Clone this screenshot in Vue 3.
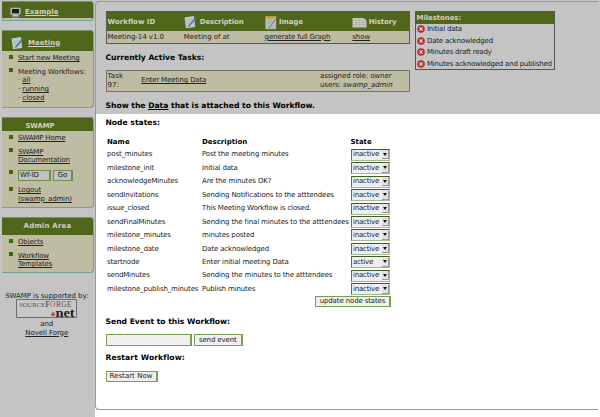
<script setup>
const nodes = [
  ['post_minutes', 'Post the meeting minutes', 'inactive'],
  ['milestone_init', 'Initial data', 'inactive'],
  ['acknowledgeMinutes', 'Are the minutes OK?', 'inactive'],
  ['sendInvitations', 'Sending Notifications to the atttendees', 'inactive'],
  ['issue_closed', 'This Meeting Workflow is closed.', 'inactive'],
  ['sendFinalMinutes', 'Sending the final minutes to the atttendees', 'inactive'],
  ['milestone_minutes', 'minutes posted', 'inactive'],
  ['milestone_date', 'Date acknowledged', 'inactive'],
  ['startnode', 'Enter initial meeting Data', 'active'],
  ['sendMinutes', 'Sending the minutes to the atttendees', 'inactive'],
  ['milestone_publish_minutes', 'Publish minutes', 'inactive'],
]
const milestones = ['Initial data', 'Date acknowledged', 'Minutes draft ready', 'Minutes acknowledged and published']
</script>

<template>
  <div class="page">
    <aside>
      <section class="box example">
        <header>
          <svg width="11" height="11" viewBox="0 0 11 11"><rect x=".5" y=".8" width="10" height="7" rx="1" fill="#b5b7b2" /><rect x="2" y="2" width="7" height="4.3" fill="#161c20" /><path d="M3 8h5l1.5 2.2h-8z" fill="#d1d1cd" /><path d="M2 9.5h7" stroke="#555" stroke-width=".6" /></svg>
          <a>Example</a>
        </header>
      </section>
      <section class="box meeting">
        <header>
          <svg width="13" height="14" viewBox="0 0 13 14"><path d="M.5 2.5L10 1l1.2 11L2 13.2z" fill="#bcc9cf" /><path d="M2 5l7-1M2.2 7l7-1M2.5 9l7-1" stroke="#9bacb5" stroke-width=".6" /><path d="M12 1.5L4.5 10.5l-1 1.5 2-.6L12.8 2.5z" fill="#456f98" /></svg>
          <a>Meeting</a>
        </header>
        <ul>
          <li><a>Start new Meeting</a></li>
          <li class="flows"><p>Meeting Workflows:</p><p>· <a>all</a></p><p>· <a>running</a></p><p>· <a>closed</a></p></li>
        </ul>
      </section>
      <section class="box swamp">
        <header>SWAMP</header>
        <ul>
          <li><a>SWAMP Home</a></li>
          <li><a>SWAMP<br>Documentation</a></li>
          <li class="search"><span class="field wf">Wf-ID</span><span class="field go">Go</span></li>
          <li><a>Logout<br>(swamp_admin)</a></li>
        </ul>
      </section>
      <section class="box admin">
        <header>Admin Area</header>
        <ul>
          <li><a>Objects</a></li>
          <li><a>Workflow<br>Templates</a></li>
        </ul>
      </section>
      <footer>
        <p>SWAMP is supported by:</p>
        <svg class="sf" width="61" height="19" viewBox="0 0 61 19"><rect x=".5" y=".5" width="60" height="18" rx=".5" fill="#c8c8c8" stroke="#555" stroke-width=".8" /><g font-family="Liberation Serif, serif"><text x="3" y="7.8" font-size="6.6" textLength="26" lengthAdjust="spacingAndGlyphs" fill="#555">SOURCE</text><text y="7.8" font-size="7.5" fill="#555"><tspan x="29.3" font-weight="bold">F</tspan><tspan x="34" fill="#b44b43">O</tspan><tspan x="40 45.3 51">RGE</tspan></text><text x="39.5" y="17.5" font-size="11.5" font-weight="bold" textLength="19" lengthAdjust="spacingAndGlyphs" fill="#222">net</text></g><circle cx="37" cy="15.3" r="2" fill="#bd483a" /><circle cx="36.5" cy="14.8" r=".8" fill="#d98b65" /></svg>
        <p>and</p>
        <p><a>Novell Forge</a></p>
      </footer>
    </aside>
    <main>
      <div class="top">
        <div class="left">
          <div class="workflow">
            <div class="row head">
              <span>Workflow ID</span>
              <span><svg width="13" height="14" viewBox="0 0 13 14"><path d="M.5 2.5L10 1l1.2 11L2 13.2z" fill="#bcc9cf" /><path d="M2 5l7-1M2.2 7l7-1M2.5 9l7-1" stroke="#9bacb5" stroke-width=".6" /><path d="M12 1.5L4.5 10.5l-1 1.5 2-.6L12.8 2.5z" fill="#456f98" /></svg><b>Description</b></span>
              <span><svg width="12" height="15" viewBox="0 0 12 15"><rect x=".5" y="1.5" width="10.5" height="12.5" fill="#b9bbb6" stroke="#969891" stroke-width=".5" /><path d="M1 1h7l1 2.5H2z" fill="#c49d20" /><path d="M10.5 4L4 13" stroke="#777b73" /><path d="M3 6h5M3 8h3" stroke="#a0a39c" stroke-width=".6" /></svg><b>Image</b></span>
              <span><svg width="15" height="11" viewBox="0 0 15 11"><path d="M.5 1h11l3 2.5v7H.5z" fill="#c5c6bf" /><path d="M1 3.5h10M1 5.5h13M1 7.5h13M4 1.5v9M7.5 1.5v9M11 1.5v9" stroke="#a9aba4" stroke-width=".4" /></svg><b>History</b></span>
            </div>
            <div class="row data"><span>Meeting-14 v1.0</span><span>Meeting of at</span><span class="tight"><a>generate full Graph</a></span><span><a>show</a></span></div>
          </div>
          <h2 class="current">Currently Active Tasks:</h2>
          <div class="task"><span>Task<br>97:</span><a class="tight">Enter Meeting Data</a><span>assigned role: owner<br>users: <i>swamp_admin</i></span></div>
          <h2 class="show">Show the <a>Data</a> that is attached to this Workflow.</h2>
        </div>
        <div class="milestones">
          <header>Milestones:</header>
          <div v-for="m in milestones" :key="m" class="milestone">
            <svg width="8" height="8" viewBox="0 0 8 8"><circle cx="4" cy="4" r="3.8" fill="#bb2828" /><path d="M2.4 2.4l3.2 3.2M5.6 2.4L2.4 5.6" stroke="#ddd" stroke-width="1.2" /></svg>{{ m }}
          </div>
        </div>
      </div>
      <h2 class="states">Node states:</h2>
      <div class="node names"><b>Name</b><b>Description</b><b>State</b></div>
      <div v-for="n in nodes" :key="n[0]" class="node">
        <span>{{ n[0] }}</span><span>{{ n[1] }}</span>
        <div class="select"><span>{{ n[2] }}</span><i><svg width="4" height="3" viewBox="0 0 4 3"><path d="M0 0h4L2 3z" fill="#111" /></svg></i></div>
      </div>
      <div class="field update">update node states</div>
      <h2 class="send">Send Event to this Workflow:</h2>
      <div class="event"><span class="field input"></span><span class="field button">send event</span></div>
      <h2 class="restart">Restart Workflow:</h2>
      <div class="field now">Restart Now</div>
    </main>
  </div>
</template>

<style>
body { background: #fff; overflow: hidden; }
</style>
<style scoped>
* { box-sizing: border-box; }
.page { width: 600px; height: 417px; display: flex; overflow: hidden; font: 7px/8.7px "DejaVu Sans", sans-serif; color: #222; background: linear-gradient(#c4c4c4 114px, #fff 114px); white-space: nowrap; }
p, ul, h2 { margin: 0; padding: 0; }
a { text-decoration: underline; text-decoration-thickness: .7px; text-underline-offset: 1px; }
svg { flex: none; display: block; }
aside { width: 95px; height: 417px; flex: none; padding: 1px 1px 0 2px; background: #c4c4c4; }
.box { width: 92px; background: #bebca2; border: solid #71a09d; border-width: 0 1px 1px 0; border-radius: 0 4px 4px 0; overflow: hidden; }
.box header { background: #50661a; color: #d0d0c5; font-weight: bold; display: flex; align-items: center; justify-content: center; border-top: 1px solid #71936a; }
.example { height: 20px; }
.example header { height: 17px; justify-content: flex-start; padding: 4px 0 0 8px; gap: 4px; }
.meeting { height: 78px; margin-top: 9px; }
.meeting header { height: 21px; justify-content: flex-start; padding: 4px 0 0 9px; gap: 4px; }
.swamp { height: 91px; margin-top: 9px; }
.swamp header { height: 14px; padding: 4px 15px 0 0; font-size: 6.8px; }
.admin { height: 56px; margin-top: 9px; }
.admin header { height: 18px; letter-spacing: .2px; }
ul { list-style: none; padding: 3.3px 0 0 16px; letter-spacing: -.16px; }
.flows { letter-spacing: -.06px; }
li { position: relative; margin-bottom: 4.6px; }
li::before { content: ''; position: absolute; width: 4px; height: 4px; background: #3f6808; left: -9px; top: .7px; }
.search { display: flex; gap: 2px; height: 12px; letter-spacing: 0; }
.field { display: flex; align-items: center; justify-content: center; height: 11.5px; background: #efefef; border: 1px solid #76a154; border-right-width: 2px; letter-spacing: -.13px; }
.search .field { background: #c0c0c0; border-color: #718f4b; }
.wf.field { width: 33px; justify-content: flex-start; padding-left: 1px; letter-spacing: 0; }
.go { width: 20px; }
footer { display: flex; flex-direction: column; align-items: center; margin-top: 18.6px; padding-right: 2.5px; letter-spacing: -.06px; }
.sf { margin: -1.5px 0 2px; }
main { flex: 1; height: 409px; margin: 1px 2px 0 0; border: solid #77a9a6; border-width: 1px 0 1px 1px; border-radius: 4px 0 0 4px; padding-left: 9.5px; }
.top { height: 112px; display: flex; gap: 4.5px; padding-top: 9px; }
.left { width: 304.5px; }
.workflow { border: 1px solid #59594d; background: #bebca2; height: 33px; }
.row { display: grid; grid-template-columns: 76.2px 80.9px 87.7px 1fr; padding-left: 1px; align-items: center; letter-spacing: -.05px; }
.row > span { display: flex; align-items: center; gap: 3px; }
.row > span:nth-child(3) { gap: 2.5px; }
.row > span:nth-child(4) { gap: 1.5px; }
.head { height: 19px; padding-top: 1px; background: #50661a; color: #d0d0c5; font-weight: bold; letter-spacing: -.12px; }
.head > span:first-child { letter-spacing: 0; }
.data { height: 12.5px; }
.row .tight { letter-spacing: -.14px; }
.tight { letter-spacing: -.18px; }
h2 { font-size: 7.62px; line-height: 10px; color: #000; }
.current { margin-top: 9px; }
.task { height: 22.5px; margin-top: 6.5px; border: 1px solid #717166; background: #bebca2; display: grid; grid-template-columns: 33.7px 178.8px 1fr; align-items: center; padding-left: 1px; letter-spacing: -.07px; }
.task > span:first-child { letter-spacing: .15px; }
.show { margin-top: 9px; }
.milestones { width: 140px; height: 59px; border: 1px solid #555; letter-spacing: -.21px; }
.milestones header { height: 11.5px; background: #50661a; color: #d0d0c5; font-weight: bold; padding: 1.5px 0 0 1px; letter-spacing: -.08px; }
.milestone { height: 11.6px; display: flex; align-items: center; gap: 2.5px; padding-left: 1px; }
.states { margin-top: 4.4px; }
.node { display: grid; grid-template-columns: 95px 148.5px 40px; height: 13.46px; align-items: center; padding-left: 1.5px; color: #222; letter-spacing: -.15px; }
.names { color: #000; height: 11px; margin-top: 8.6px; letter-spacing: 0; }
.select { height: 12px; width: 39.5px; display: flex; align-items: center; background: #eee; border: 1.5px solid #a4b992; border-top-color: #405d26; border-left-color: #597544; padding-left: 1.5px; letter-spacing: -.2px; }
.select i { margin-left: auto; width: 7px; height: 9px; display: flex; align-items: center; justify-content: center; border: solid #999; border-width: 0 1px 1px 0; background: #e2e2e2; }
.update { width: 76px; margin: 0 0 0 209.5px; }
.send { margin-top: 9.8px; }
.event { display: flex; gap: 2px; margin-top: 7px; }
.input { width: 86.5px; }
.button { width: 48.5px; }
.restart { margin-top: 7.7px; letter-spacing: .1px; }
.now { width: 52px; margin-top: 7.2px; letter-spacing: .03px; }
</style>
